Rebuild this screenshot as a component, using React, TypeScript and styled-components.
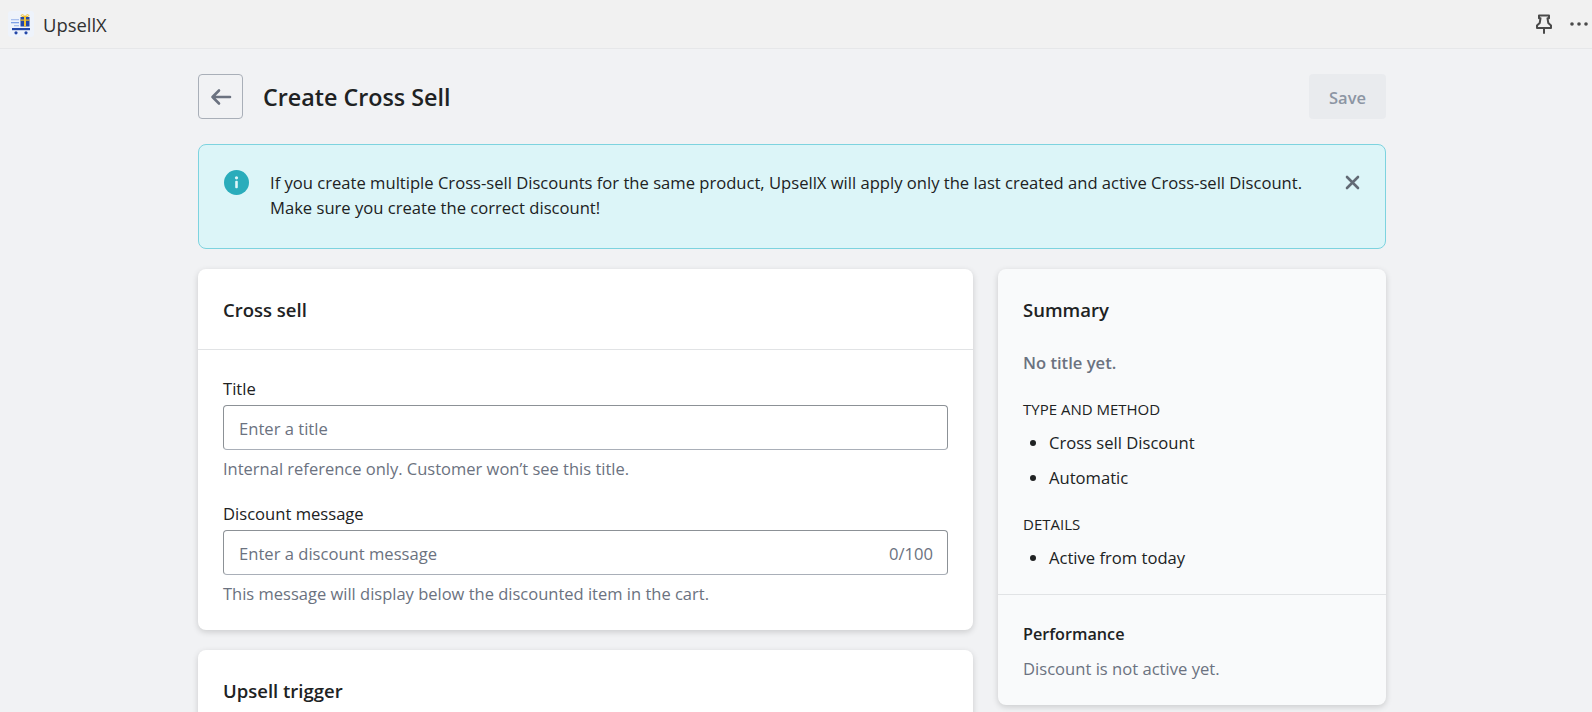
import styled, { createGlobalStyle } from 'styled-components'

const GlobalStyle = createGlobalStyle`
  html, body {
    margin: 0;
    height: 712px;
    overflow: hidden;
    background: #f1f2f4;
    color: #202223;
    font-family: "Open Sans", "Noto Sans", sans-serif;
    font-size: 16.6px;
  }
`

export default function App() {
  return (
    <>
      <GlobalStyle />
      <TopBar>
        <Brand>
          <AppLogo />
          <BrandName>UpsellX</BrandName>
        </Brand>
        <TopActions>
          <PinIcon />
          <DotsIcon />
        </TopActions>
      </TopBar>

      <Page>
        <Header>
          <BackButton aria-label="Back">
            <svg width="24" height="24" viewBox="0 0 24 24" fill="none" stroke="#6b7280" strokeWidth="2.6" strokeLinecap="round" strokeLinejoin="round">
              <path d="M21 12H3.500M10 5.500L3.500 12l6.500 6.500" />
            </svg>
          </BackButton>
          <PageTitle>Create Cross Sell</PageTitle>
          <SaveButton>Save</SaveButton>
        </Header>

        <Banner>
          <InfoIcon />
          <BannerText>
            If you create multiple Cross-sell Discounts for the same product, UpsellX will apply only the last created and active Cross-sell Discount.
            <br />
            Make sure you create the correct discount!
          </BannerText>
          <CloseIcon />
        </Banner>

        <Columns>
          <MainColumn>
            <Card>
              <CardHeading>
                <CardTitle>Cross sell</CardTitle>
              </CardHeading>
              <CardBody>
                <Field>
                  <Label>Title</Label>
                  <InputBox>
                    <Placeholder>Enter a title</Placeholder>
                  </InputBox>
                  <Help>Internal reference only. Customer won’t see this title.</Help>
                </Field>
                <Field>
                  <Label>Discount message</Label>
                  <InputBox>
                    <Placeholder>Enter a discount message</Placeholder>
                    <Counter>0/100</Counter>
                  </InputBox>
                  <Help>This message will display below the discounted item in the cart.</Help>
                </Field>
              </CardBody>
            </Card>
            <Card>
              <CardHeading>
                <CardTitle>Upsell trigger</CardTitle>
              </CardHeading>
            </Card>
          </MainColumn>

          <Sidebar>
            <SummaryTop>
              <CardTitle>Summary</CardTitle>
              <NoTitle>No title yet.</NoTitle>
              <Overline>Type and method</Overline>
              <Bullets>
                <li>Cross sell Discount</li>
                <li>Automatic</li>
              </Bullets>
              <Overline>Details</Overline>
              <Bullets>
                <li>Active from today</li>
              </Bullets>
            </SummaryTop>
            <SummaryBottom>
              <SubTitle>Performance</SubTitle>
              <Muted>Discount is not active yet.</Muted>
            </SummaryBottom>
          </Sidebar>
        </Columns>
      </Page>
    </>
  )
}

function AppLogo() {
  return (
    <svg width="26" height="26" viewBox="0 0 26 26">
      <rect width="26" height="26" rx="3" fill="#eef3fb" />
      <rect x="12.500" y="6" width="9" height="9.500" fill="#2347a8" />
      <rect x="16" y="6" width="2" height="9.500" fill="#f2c230" />
      <rect x="12.500" y="8.500" width="9" height="1.200" fill="#f2c230" />
      <path d="M17 5.500c-3-3.500-5-1-3 0h6c2-1 0-3.500-3 0" fill="none" stroke="#f2c230" strokeWidth="1" />
      <rect x="3" y="8" width="8" height="1.300" fill="#a9c0ee" />
      <rect x="3" y="11" width="8" height="1.300" fill="#7ea2e6" />
      <rect x="6" y="14" width="5" height="1.300" fill="#a9c0ee" />
      <rect x="4" y="17" width="18" height="2.200" fill="#2347a8" />
      <circle cx="8" cy="21.800" r="1.600" fill="#2347a8" />
      <circle cx="18" cy="21.800" r="1.600" fill="#2347a8" />
    </svg>
  )
}

function PinIcon() {
  return (
    <svg width="16" height="20" viewBox="0 0 16 20" fill="none" stroke="#4a4a4a" strokeWidth="2" strokeLinejoin="round" strokeLinecap="round">
      <path d="M3 1.500h10v2.800h-1.500l.8 4.700L15 11.500v2.500H1v-2.500L3.700 9l.8-4.700H3z" />
      <path d="M8 14.500V19" />
    </svg>
  )
}

function DotsIcon() {
  return (
    <svg width="18" height="4" viewBox="0 0 18 4" fill="#4a4a4a">
      <circle cx="2" cy="2" r="1.800" />
      <circle cx="9" cy="2" r="1.800" />
      <circle cx="16" cy="2" r="1.800" />
    </svg>
  )
}

function InfoIcon() {
  return (
    <InfoWrap>
      <svg width="25" height="25" viewBox="0 0 25 25">
        <circle cx="12.500" cy="12.500" r="12.500" fill="#2aacbb" />
        <circle cx="12.500" cy="7.800" r="1.600" fill="#dff6f9" />
        <rect x="11.200" y="10.800" width="2.600" height="7.400" rx="1" fill="#dff6f9" />
      </svg>
    </InfoWrap>
  )
}

function CloseIcon() {
  return (
    <CloseWrap>
      <svg width="15" height="15" viewBox="0 0 15 15" stroke="#626a75" strokeWidth="2.600" strokeLinecap="round">
        <path d="M2 2l11 11M13 2L2 13" />
      </svg>
    </CloseWrap>
  )
}

// Style

const TopBar = styled.div`
  height: 49px;
  box-sizing: border-box;
  background: #f1f1f1;
  border-bottom: 1px solid #e6e7e9;
  display: flex;
  align-items: center;
  justify-content: space-between;
  padding: 0 4px 0 8px;
`

const Brand = styled.div`
  display: flex;
  align-items: center;
  gap: 9px;
`

const BrandName = styled.span`
  font-size: 18.400px;
  color: #303030;
`

const TopActions = styled.div`
  display: flex;
  align-items: center;
  gap: 18px;
`

const Page = styled.div`
  width: 1188px;
  margin: 0 auto;
  padding: 25px 0 0 0;
  position: relative;
  left: -4px;
`

const Header = styled.div`
  display: flex;
  align-items: center;
  margin-bottom: 25px;
`

const BackButton = styled.button`
  width: 45px;
  height: 45px;
  box-sizing: border-box;
  border: 1px solid #a9afb8;
  border-radius: 4px;
  background: transparent;
  display: flex;
  align-items: center;
  justify-content: center;
  padding: 0;
`

const PageTitle = styled.h1`
  flex: 1;
  margin: 1px 0 0 20px;
  font-size: 23.300px;
  line-height: 32px;
  font-weight: 600;
  color: #202223;
`

const SaveButton = styled.button`
  width: 77px;
  height: 45px;
  border: 0;
  border-radius: 4px;
  background: #e9ebee;
  color: #8c95a3;
  font: 600 16.500px "Open Sans", sans-serif;
  padding: 2px 0 0;
`

const Banner = styled.div`
  height: 105px;
  box-sizing: border-box;
  background: #dcf5f8;
  border: 1px solid #7dd3df;
  border-radius: 8px;
  padding: 25px 25px 0;
  display: flex;
  margin-bottom: 20px;
`

const InfoWrap = styled.div`
  flex: none;
  width: 46px;
`

const BannerText = styled.div`
  flex: 1;
  line-height: 25px;
  color: #202223;
`

const CloseWrap = styled.div`
  flex: none;
  margin: 2px 0 0 20px;
  width: 15px;
  height: 15px;
`

const Columns = styled.div`
  display: flex;
  align-items: flex-start;
  gap: 25px;
`

const MainColumn = styled.div`
  width: 775px;
  display: flex;
  flex-direction: column;
  gap: 20px;
`

const Card = styled.div`
  background: #fff;
  border-radius: 8px;
  box-shadow: 0 2px 6px rgba(0, 0, 0, 0.16);
`

const CardHeading = styled.div`
  padding: 29px 25px 27px;
  border-bottom: 1px solid #e1e3e5;
`

const CardTitle = styled.h2`
  margin: 0;
  font-size: 18.500px;
  line-height: 24px;
  font-weight: 600;
  color: #202223;
`

const CardBody = styled.div`
  padding: 27px 25px 24px;
  display: flex;
  flex-direction: column;
  gap: 21px;
`

const Field = styled.div`
  display: flex;
  flex-direction: column;
`

const Label = styled.label`
  line-height: 24px;
  margin-bottom: 4px;
`

const InputBox = styled.div`
  height: 45px;
  box-sizing: border-box;
  border: 1px solid #8c9196;
  border-bottom-color: #a9afb8;
  border-radius: 4px;
  padding: 1px 14px 0 15px;
  display: flex;
  align-items: center;
  justify-content: space-between;
`

const Placeholder = styled.span`
  color: #6b7280;
`

const Counter = styled.span`
  color: #6b7280;
`

const Help = styled.div`
  margin-top: 7px;
  font-size: 16.500px;
  line-height: 24px;
  color: #6b7280;
`

const Sidebar = styled.div`
  width: 388px;
  height: 436px;
  background: #f9fafb;
  border-radius: 8px;
  box-shadow: 0 2px 6px rgba(0, 0, 0, 0.16);
`

const SummaryTop = styled.div`
  padding: 29px 25px 24px;
  border-bottom: 1px solid #e1e3e5;
`

const NoTitle = styled.div`
  margin-top: 29px;
  font-weight: 600;
  line-height: 24px;
  color: #6b7280;
`

const Overline = styled.div`
  margin-top: 24px;
  font-size: 15px;
  line-height: 20px;
  font-weight: 500;
  text-transform: uppercase;
`

const Bullets = styled.ul`
  margin: 12px 0 0;
  padding: 0 0 0 26px;
  line-height: 24px;

  li + li {
    margin-top: 11px;
  }
`

const SummaryBottom = styled.div`
  padding: 27px 25px 0;
`

const SubTitle = styled.div`
  font-weight: 600;
  font-size: 16.200px;
  line-height: 24px;
`

const Muted = styled.div`
  margin-top: 11px;
  line-height: 24px;
  color: #6b7280;
`
